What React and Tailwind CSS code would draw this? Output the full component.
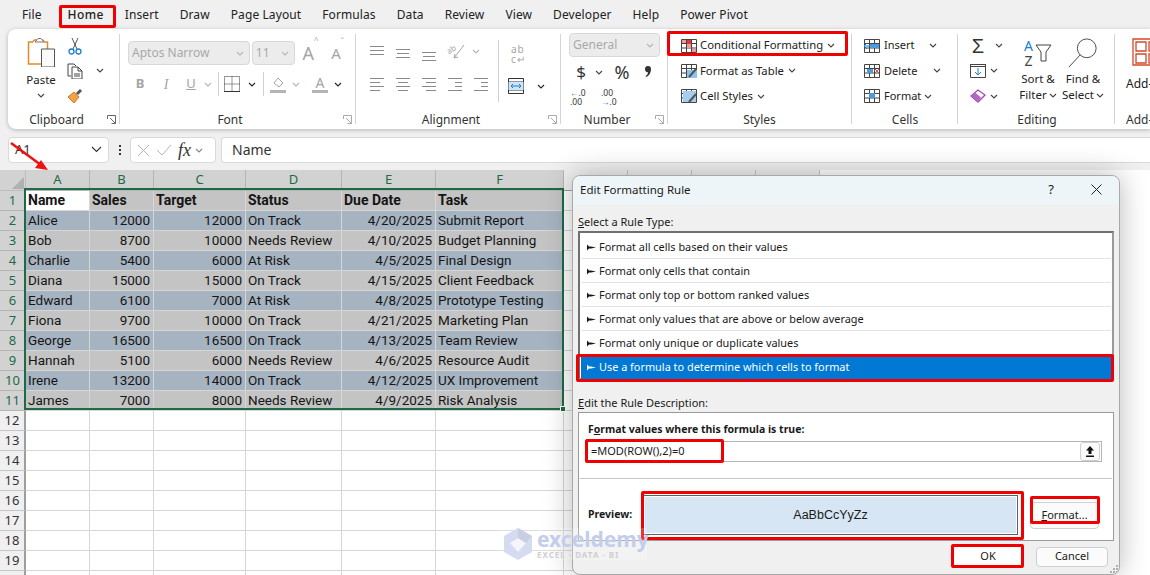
import React from "react";

const ui = "font-['Noto_Sans',sans-serif]";

const tabs = ["File", "Home", "Insert", "Draw", "Page Layout", "Formulas", "Data", "Review", "View", "Developer", "Help", "Power Pivot"];

const columns = [
  { name: "A", w: "w-[64px]" },
  { name: "B", w: "w-[64px]" },
  { name: "C", w: "w-[92px]" },
  { name: "D", w: "w-[96px]" },
  { name: "E", w: "w-[94px]" },
  { name: "F", w: "w-[128px]" },
  { name: "G", w: "w-[64px]" },
  { name: "H", w: "w-[64px]" },
  { name: "I", w: "w-[64px]" },
  { name: "J", w: "w-[64px]" },
];

const people = [
  ["Alice", "12000", "12000", "On Track", "4/20/2025", "Submit Report"],
  ["Bob", "8700", "10000", "Needs Review", "4/10/2025", "Budget Planning"],
  ["Charlie", "5400", "6000", "At Risk", "4/5/2025", "Final Design"],
  ["Diana", "15000", "15000", "On Track", "4/15/2025", "Client Feedback"],
  ["Edward", "6100", "7000", "At Risk", "4/8/2025", "Prototype Testing"],
  ["Fiona", "9700", "10000", "On Track", "4/21/2025", "Marketing Plan"],
  ["George", "16500", "16500", "On Track", "4/13/2025", "Team Review"],
  ["Hannah", "5100", "6000", "Needs Review", "4/6/2025", "Resource Audit"],
  ["Irene", "13200", "14000", "On Track", "4/12/2025", "UX Improvement"],
  ["James", "7000", "8000", "Needs Review", "4/9/2025", "Risk Analysis"],
];

const header = ["Name", "Sales", "Target", "Status", "Due Date", "Task"];

const rules = [
  "Format all cells based on their values",
  "Format only cells that contain",
  "Format only top or bottom ranked values",
  "Format only values that are above or below average",
  "Format only unique or duplicate values",
];

const Chev = ({ c = "#444" }) => (
  <svg width="8" height="5" viewBox="0 0 8 5" fill="none" stroke={c} strokeWidth="1.1">
    <path d="M1 1l3 3 3-3" />
  </svg>
);

const Launcher = ({ c = "#aaa" }) => (
  <svg width="9" height="9" viewBox="0 0 9 9" fill="none" stroke={c} strokeWidth="1">
    <path d="M.5 4V.5H8.5V8.5M3 3l5 5M4.500 8.500h4v-4" />
  </svg>
);

const Sep = () => <div className="w-px my-[5px] bg-[#d4d4d4] shrink-0" />;

const Label = ({ children, launcher, lc, pad = "pr-0" }) => (
  <div className={`h-[20px] pt-[1px] flex items-center justify-center relative text-[12px] text-[#333] ${pad}`}>
    {children}
    {launcher && (
      <span className="absolute right-[3px] top-[6px] flex">
        <Launcher c={lc} />
      </span>
    )}
  </div>
);

// paragraph lines: [y, x, width]
const Lines = ({ rows }) => (
  <svg width="16" height="20" viewBox="0 0 16 20" stroke="#8a8a8a" strokeWidth="1" fill="none">
    {rows.map(([y, x, w], i) => (
      <path key={i} d={`M${x} ${y + 0.5}h${w}`} />
    ))}
  </svg>
);

const GridIcon = ({ children }) => (
  <svg width="18" height="16" viewBox="0 0 18 16" fill="none">
    <path d="M1.500 1.500h15v13h-15zM1.500 5.500h15M1.500 10h15M6.500 1.500v13M11.500 1.500v13" stroke="#444" />
    {children}
  </svg>
);

const StyleRow = ({ icon, text }) => (
  <div className="h-[25.5px] flex items-center">
    <span className="w-[20px] ml-[11px] flex justify-center">{icon}</span>
    <span className="ml-[1px] text-[11.3px] text-[#222] mr-[4px]">{text}</span>
    <Chev />
  </div>
);

const CellRow = ({ icon, text, w }) => (
  <div className="h-[25.5px] flex items-center">
    <span className="w-[18px] ml-[11px] flex justify-center">{icon}</span>
    <span className={`ml-[3px] text-[11px] text-[#222] ${w}`}>{text}</span>
    <Chev />
  </div>
);

const Combo = ({ text, w }) => (
  <div className={`${w} h-[24px] bg-[#ececec] border border-[#d8d8d8] rounded-[4px] flex items-center justify-between pl-[3px] pr-[5px] text-[12px] text-[#a9a9a9]`}>
    <span>{text}</span>
    <Chev c="#b5b5b5" />
  </div>
);

const alignTop = [[[5, 1, 14], [9, 1, 14], [13, 1, 14]], [[8, 1, 14], [12, 2, 12], [16, 1, 14]], [[11, 1, 14], [15, 2, 12], [19, 1, 14]]];
const alignBottom = [
  [[4, 1, 14], [8, 1, 10], [12, 1, 14], [16, 1, 10]],
  [[4, 1, 14], [8, 3, 10], [12, 1, 14], [16, 3, 10]],
  [[4, 1, 14], [8, 5, 10], [12, 1, 14], [16, 5, 10]],
];

const Ribbon = () => (
  <div className={`ml-2 h-[100px] flex rounded-l-[8px] bg-white shadow-[0_1px_4px_rgba(0,0,0,0.25)] ${ui}`}>
    {/* Clipboard */}
    <div className="w-[111px] flex flex-col shrink-0">
      <div className="h-[80px] flex">
        <div className="w-[52px] ml-[7px] flex flex-col items-center pt-[8px]">
          <svg width="28" height="30" viewBox="0 0 28 30" fill="none">
            <path d="M1.500 5h4l2-2h8l2 2h3v22h-19z" fill="#fff" stroke="#e08a2c" strokeWidth="1.5" />
            <path d="M8 5l3-3.500h3l3 3.500z" fill="#fff" stroke="#777" />
            <path d="M14.500 12h13v18h-13z" fill="#fafafa" stroke="#555" />
          </svg>
          <span className="text-[11.5px] text-[#222] mt-[5px] leading-[16px]">Paste</span>
          <span className="mt-[5px] flex"><Chev /></span>
        </div>
        <div className="flex flex-col pt-[4px]">
          <div className="h-[25.5px] flex items-center">
            <svg width="14" height="18" viewBox="0 0 14 18" fill="none" className="ml-[1px]">
              <path d="M4 1l5 11M10 1L5 12" stroke="#555" />
              <circle cx="3.5" cy="14.5" r="2.5" stroke="#1d7fd0" strokeWidth="1.3" />
              <circle cx="10.5" cy="14.5" r="2.5" stroke="#1d7fd0" strokeWidth="1.3" />
            </svg>
          </div>
          <div className="h-[25.5px] flex items-center">
            <svg width="16" height="16" viewBox="0 0 16 16" fill="none" stroke="#444">
              <path d="M4 13H1V1h6l2 2M5 4h6l4 4v8H5zM11 4v4h4M7 11h6M7 13h6" />
            </svg>
            <span className="ml-[13px] flex"><Chev /></span>
          </div>
          <div className="h-[25.5px] flex items-center">
            <svg width="17" height="16" viewBox="0 0 17 16" fill="none">
              <path d="M1 9l6-5 5 5-5 6z" fill="#f0a24a" stroke="#d9781f" />
              <path d="M10 6l4-4" stroke="#555" strokeWidth="3" />
            </svg>
          </div>
        </div>
      </div>
      <Label launcher lc="#666" pad="pr-[14px]">Clipboard</Label>
    </div>
    <Sep />

    {/* Font */}
    <div className="w-[235px] flex flex-col shrink-0">
      <div className="h-[80px] flex flex-col">
        <div className="flex items-center gap-[2px] ml-[8px] mt-[12px]">
          <Combo text="Aptos Narrow" w="w-[123px]" />
          <Combo text="11" w="w-[43px]" />
          <span className="ml-[6px] w-[27px] text-[18px] leading-none text-[#a5a5a5]">A<sup className="text-[8px] align-top">^</sup></span>
          <span className="w-[24px] text-[15px] leading-none text-[#a5a5a5]">A<sup className="text-[8px] align-top">ˇ</sup></span>
        </div>
        <div className="flex items-center mt-[7px] h-[24px] text-[#a5a5a5]">
          <span className="w-[14px] ml-[13px] text-center font-bold text-[13px]">B</span>
          <span className="w-[14px] ml-[12px] text-center italic text-[14px] font-['Liberation_Serif',serif]">I</span>
          <span className="w-[14px] ml-[11px] text-center underline text-[13px]">U</span>
          <span className="ml-[6px] flex"><Chev c="#b5b5b5" /></span>
          <span className="w-px h-[24px] bg-[#cfcfcf] ml-[6px]" />
          <svg width="16" height="16" viewBox="0 0 16 16" fill="none" stroke="#333" strokeDasharray="1 1" className="ml-[5px]">
            <path d="M.5 .5h15v15H.5zM8 .5v15M.5 8h15" />
            <path d="M0 15.5h16" strokeDasharray="none" />
          </svg>
          <span className="ml-[8px] flex"><Chev c="#222" /></span>
          <span className="w-px h-[24px] bg-[#cfcfcf] ml-[7px]" />
          <svg width="17" height="17" viewBox="0 0 17 17" fill="none" className="ml-[6px]">
            <path d="M8 2l5 5-4 4-5-4z" stroke="#a5a5a5" />
            <path d="M0 14h16v3H0z" fill="#b5b5b5" />
          </svg>
          <span className="ml-[5px] flex"><Chev c="#b5b5b5" /></span>
          <span className="w-[16px] ml-[12px] text-center text-[14px] leading-[15px] border-b-[3px] border-[#b5b5b5]">A</span>
          <span className="ml-[6px] flex"><Chev c="#222" /></span>
        </div>
      </div>
      <Label launcher pad="pr-[15px]">Font</Label>
    </div>
    <Sep />

    {/* Alignment */}
    <div className="w-[204px] flex flex-col shrink-0">
      <div className="h-[80px] flex">
        <div className="flex flex-col ml-[13px] mt-[12px]">
          <div className="flex gap-[10px] h-[20px] items-center">
            {alignTop.map((rows, i) => <Lines key={i} rows={rows} />)}
            <svg width="18" height="18" viewBox="0 0 18 18" fill="none" stroke="#a5a5a5" className="overflow-visible">
              <text x="1" y="11" fontSize="8" fill="#a5a5a5" stroke="none" transform="rotate(-35 4 10)">ab</text>
              <path d="M17 3L7 16M7 16l4-1M7 16l1-4" />
            </svg>
            <span className="-ml-[3px] flex"><Chev c="#b5b5b5" /></span>
          </div>
          <div className="flex gap-[10px] h-[20px] items-center mt-[13px]">
            {alignBottom.map((rows, i) => <Lines key={i} rows={rows} />)}
            <Lines rows={[[4, 1, 14], [8, 8, 7], [12, 8, 7], [16, 1, 14]]} />
            <Lines rows={[[4, 1, 14], [8, 8, 7], [12, 8, 7], [16, 1, 14]]} />
          </div>
        </div>
        <span className="w-px h-[62px] mt-[11px] ml-[9px] bg-[#cfcfcf]" />
        <div className="flex flex-col ml-[10px] mt-[15px]">
          <span className="text-[10px] leading-[10px] text-[#a5a5a5] pl-[2px] tracking-[1px]">ab<br />c↵</span>
          <div className="flex items-center mt-[14px]">
            <svg width="16" height="16" viewBox="0 0 16 16" fill="none" className="-ml-[1px]">
              <path d="M.5 .5h15v15H.5zM.5 4h15M.5 12h15" stroke="#333" />
              <path d="M.5 4h15v8H.5z" fill="#cfe4f7" />
              <path d="M3 8h10M5 6L3 8l2 2M11 6l2 2-2 2" stroke="#1d7fd0" />
            </svg>
            <span className="ml-[13px] flex"><Chev c="#222" /></span>
          </div>
        </div>
      </div>
      <Label launcher pad="pr-[14px]">Alignment</Label>
    </div>
    <Sep />

    {/* Number */}
    <div className="w-[106px] flex flex-col shrink-0">
      <div className="h-[80px] flex flex-col pl-[8px]">
        <div className="mt-[4px]"><Combo text="General" w="w-[91px]" /></div>
        <div className="flex items-center h-[26px] mt-[2px] text-[#333]">
          <span className="w-[24px] text-center text-[17px]">$</span>
          <span className="ml-[2px] flex"><Chev /></span>
          <span className="ml-[7px] w-[24px] text-center text-[18px]">%</span>
          <svg width="8" height="12" viewBox="0 0 8 12" className="ml-[10px]">
            <path d="M1 3a3 3 0 1 1 6 0c0 4-2 7-5 8l-.5-.8C3 9 4 7.800 4 6.200 2 6.500 1 5 1 3z" fill="#333" />
          </svg>
        </div>
        <div className="flex items-center h-[26px] text-[8.5px] leading-[9px] text-[#333]">
          <span className="w-[18px] ml-[1px]"><span className="text-[#1d7fd0]">←</span>.0<br />.00</span>
          <span className="w-[18px] ml-[13px]">.00<br /><span className="text-[#1d7fd0]">→</span>.0</span>
        </div>
      </div>
      <Label launcher pad="pr-[14px]">Number</Label>
    </div>
    <Sep />

    {/* Styles */}
    <div className="w-[183px] flex flex-col shrink-0">
      <div className="h-[80px] pt-[4px] flex flex-col">
        <StyleRow text="Conditional Formatting" icon={<GridIcon><path d="M2 2h4v3H2zM7 6h4v4H7zM12 11h4v3h-4z" fill="#f29a9a" /><path d="M7 2h4v4H7z" fill="#e33" /></GridIcon>} />
        <StyleRow text="Format as Table" icon={<GridIcon><path d="M7 7h10v8H7z" fill="#8cc2ee" /><path d="M9 14l7-8" stroke="#555" strokeWidth="2" /></GridIcon>} />
        <StyleRow text="Cell Styles" icon={<GridIcon><path d="M3 3h13v11H3z" fill="#a5cdf0" /><path d="M9 14l7-8" stroke="#555" strokeWidth="2" /></GridIcon>} />
      </div>
      <Label>Styles</Label>
    </div>
    <Sep />

    {/* Cells */}
    <div className="w-[105px] flex flex-col shrink-0">
      <div className="h-[80px] pt-[4px] flex flex-col">
        <CellRow text="Insert" w="w-[45px]" icon={<GridIcon><path d="M7 6h9v4H7z" fill="#4a9be0" /><path d="M7 8H1M4 5L1 8l3 3" stroke="#1d7fd0" /></GridIcon>} />
        <CellRow text="Delete" w="w-[49px]" icon={<GridIcon><path d="M4 6h6v4H4z" fill="#4a9be0" /><path d="M12 6l4 4M16 6l-4 4" stroke="#e44" /></GridIcon>} />
        <CellRow text="Format" w="w-[40px]" icon={<GridIcon><path d="M6 5h6v5H6z" fill="#4a9be0" /></GridIcon>} />
      </div>
      <Label pad="pl-[1px]">Cells</Label>
    </div>
    <Sep />

    {/* Editing */}
    <div className="w-[156px] flex flex-col shrink-0">
      <div className="h-[80px] flex">
        <div className="flex flex-col pt-[4px] ml-[12px] w-[50px]">
          <div className="h-[25.5px] flex items-center">
            <span className="w-[16px] text-[20px] text-center leading-none text-[#333] font-['Liberation_Sans',sans-serif]">Σ</span>
            <span className="ml-[9px] flex"><Chev /></span>
          </div>
          <div className="h-[25.5px] flex items-center">
            <svg width="16" height="14" viewBox="0 0 16 14" fill="none">
              <path d="M.5 .5h15v13H.5z" stroke="#444" />
              <path d="M.5 .5h15v2H.5z" stroke="#444" />
              <path d="M8 4v7M5 8l3 3 3-3" stroke="#1d7fd0" />
            </svg>
            <span className="ml-[4px] flex"><Chev /></span>
          </div>
          <div className="h-[25.5px] flex items-center">
            <svg width="16" height="14" viewBox="0 0 16 14" fill="none">
              <path d="M1 7l7-6 7 5-7 7z" fill="#fff" stroke="#a04ab0" strokeWidth="1.3" />
              <path d="M1 7l4-3.500 6 5-3 4.500z" fill="#b565c5" />
            </svg>
            <span className="ml-[4px] flex"><Chev /></span>
          </div>
        </div>
        <div className="w-[54px] -ml-[9px] flex flex-col items-center pt-[8px]">
          <div className="h-[32px] flex items-center gap-[2px]">
            <span className="text-[14px] leading-[15px] text-center"><span className="text-[#1d7fd0]">A</span><br /><span className="text-[#444]">Z</span></span>
            <svg width="17" height="19" viewBox="0 0 17 19" fill="none" stroke="#444">
              <path d="M1 1h15L11 8v9H6V8z" />
            </svg>
          </div>
          <span className="text-[11.5px] text-[#222] leading-[16px] mt-[2px]">Sort &amp;</span>
          <span className="text-[11.5px] text-[#222] leading-[16px] flex items-center gap-[2px]">Filter <Chev /></span>
        </div>
        <div className="w-[48px] -ml-[6px] flex flex-col items-center pt-[8px]">
          <div className="h-[32px] flex items-center">
            <svg width="30" height="30" viewBox="0 0 32 32" fill="none" stroke="#444">
              <circle cx="20" cy="11" r="10" />
              <path d="M13 18L1 31" />
            </svg>
          </div>
          <span className="text-[11.5px] text-[#222] leading-[16px] mt-[2px]">Find &amp;</span>
          <span className="text-[11.5px] text-[#222] leading-[16px] flex items-center gap-[2px]">Select <Chev /></span>
        </div>
      </div>
      <Label pad="pl-[2px]">Editing</Label>
    </div>
    <Sep />

    {/* Add-ins, cut off at the window edge */}
    <div className="flex-1 overflow-hidden flex flex-col">
      <div className="h-[80px] pl-[17px] pt-[9px] flex flex-col">
        <svg width="40" height="28" viewBox="0 0 40 28" fill="none" stroke="#d2492a" strokeWidth="1.3" className="shrink-0">
          <path d="M1 1h40v26H1zM4 4h10v9H4zM17 4h12v9H17zM4 16h10v9H4zM17 16h12v9H17z" />
        </svg>
        <span className="text-[12px] text-[#222] leading-[16px] mt-[10px] -ml-[6px]">Add-</span>
      </div>
      <div className="h-[20px] pt-[1px] flex items-center text-[12px] text-[#333] pl-[11px]">Add-</div>
    </div>
  </div>
);

const FormulaBar = () => (
  <div className={`mt-2 ml-2 h-[26px] flex items-stretch ${ui}`}>
    <div className="w-[101px] bg-white border border-[#d9d9d9] rounded-[4px] flex items-center justify-between pl-[6px] pr-[6px] pb-[1px] text-[13px] text-[#333]">
      <span>A1</span>
      <svg width="11" height="7" viewBox="0 0 11 7" fill="none" stroke="#333" strokeWidth="1.1"><path d="M1 1l4.500 4.500L10 1" /></svg>
    </div>
    <div className="w-[21px] flex flex-col items-center justify-center gap-[2px]">
      <span className="w-[2px] h-[2px] bg-[#333]" />
      <span className="w-[2px] h-[2px] bg-[#333]" />
      <span className="w-[2px] h-[2px] bg-[#333]" />
    </div>
    <div className="w-[86px] bg-white border border-[#d9d9d9] rounded-[4px] flex items-center pl-[6px]">
      <svg width="13" height="13" viewBox="0 0 13 13" fill="none" stroke="#b5b5b5"><path d="M1 1l11 11M12 1L1 12" /></svg>
      <svg width="16" height="12" viewBox="0 0 16 12" fill="none" stroke="#b5b5b5" className="ml-[6px]"><path d="M1 6l5 5L15 1" /></svg>
      <span className="ml-[6px] text-[18px] leading-none italic font-['Liberation_Serif',serif] text-[#333]">fx</span>
      <span className="ml-[4px] flex"><Chev c="#888" /></span>
    </div>
    <div className="flex-1 ml-[5px] pb-[1px] bg-white border-y border-l border-[#d9d9d9] rounded-l-[4px] flex items-center pl-[10px] text-[14px] text-[#333]">Name</div>
  </div>
);

const Sheet = () => {
  const rows = Array.from({ length: 20 }, (_, i) => i + 1);
  return (
    <div className="relative mt-[7px] flex-1 bg-white overflow-hidden">
      <div className={`flex h-[21px] ${ui}`}>
        <div className="w-[26px] shrink-0 bg-[#d2d2d2] relative border-r border-b border-[#bdbdbd] overflow-hidden">
          <svg width="14" height="14" viewBox="0 0 14 14" className="absolute right-[1px] bottom-[1px]"><path d="M14 2v12H2z" fill="#b0b0b0" /></svg>
        </div>
        {columns.map((c, i) => (
          <div
            key={c.name}
            className={`${c.w} shrink-0 border-r flex items-center justify-center text-[13px] ${i < 6 ? "bg-[#d2d2d2] text-[#1c6b46] border-[#b5b5b5] border-b border-b-[#b5b5b5]" : "bg-[#f0f0f0] text-[#444] border-[#c6c6c6] border-b border-b-[#9e9e9e]"}`}
          >
            {c.name}
          </div>
        ))}
      </div>

      {rows.map((r) => {
        const data = r === 1 ? header : people[r - 2];
        const banded = r <= 11 && r % 2 === 0;
        return (
          <div key={r} className="flex h-[20px]">
            <div className={`w-[26px] shrink-0 flex items-center justify-center text-[13px] border-b ${ui} ${r <= 11 ? "bg-[#d2d2d2] text-[#1c6b46] border-r border-[#b5b5b5]" : "bg-[#f0f0f0] text-[#333] border-[#c6c6c6] border-r-2 border-r-[#9e9e9e]"}`}>
              {r}
            </div>
            {columns.map((c, i) => {
              const v = data && data[i];
              const filled = r <= 11 && i < 6;
              const right = r > 1 && (i === 1 || i === 2 || i === 4);
              return (
                <div
                  key={c.name}
                  className={`${c.w} shrink-0 border-r border-b border-[#d6d6d6] flex items-center pl-[2px] pr-[3px] whitespace-nowrap font-['Roboto',sans-serif] text-[#151515] ${right ? "justify-end" : ""} ${r === 1 ? "font-bold text-[14px]" : "text-[13.5px]"} ${filled ? (r === 1 && i === 0 ? "bg-white" : banded ? "bg-[#a6b3c1]" : "bg-[#c4c4c4]") : ""}`}
                >
                  {v}
                </div>
              );
            })}
          </div>
        );
      })}

      {/* selected range */}
      <div className="absolute left-[24px] top-[18px] w-[540px] h-[222px] border-2 border-[#1c6b46] pointer-events-none" />
      <div className="absolute left-[560px] top-[236px] w-[6px] h-[6px] bg-[#1c6b46] border border-white" />
    </div>
  );
};

const RedBox = ({ className }) => (
  <div className={`absolute border-[3px] border-[#f00000] rounded-[2px] pointer-events-none ${className}`} />
);

const RuleArrow = () => (
  <svg width="9" height="7" viewBox="0 0 9 7" className="mr-[3px] shrink-0" fill="currentColor">
    <path d="M0 .5l2 2h2l5 1-5 1H2l-2 2z" />
  </svg>
);

const Dialog = () => (
  <div className={`absolute left-[572px] top-[175px] w-[548px] h-[400px] bg-[#f0f0f0] rounded-[8px] border border-[#a8a8a8] shadow-[0_0_28px_rgba(0,0,0,0.28)] text-[11px] text-[#1a1a1a] overflow-hidden ${ui}`}>
    <div className="h-[29px] pb-[2px] bg-[#eef5f8] flex items-center pl-[7px] text-[11.5px]">
      <span>Edit Formatting Rule</span>
      <span className="ml-auto mr-[37px] text-[13px]">?</span>
      <svg width="11" height="11" viewBox="0 0 11 11" fill="none" stroke="#222" className="mr-[17px]"><path d="M.5 .5l10 10M10.500 .5l-10 10" /></svg>
    </div>

    <div className="px-[5px]">
      <div className="h-[26px] pt-[9px] leading-[16px]"><u>S</u>elect a Rule Type:</div>
      <div className="w-[536px] h-[149px] bg-white border-2 border-[#6f6f6f] border-r-[#9a9a9a] border-b-[#9a9a9a] pt-[2px] px-[1px] flex flex-col text-[10.9px]">
        {rules.map((r) => (
          <div key={r} className="h-[24px] pt-[1px] shrink-0 border-b border-[#e4e4e4] flex items-center pl-[6px]">
            <RuleArrow />{r}
          </div>
        ))}
        <div className="h-[24px] shrink-0 bg-[#0078d4] text-white flex items-center pl-[6px]">
          <RuleArrow />Use a formula to determine which cells to format
        </div>
      </div>

      <div className="h-[32px] pt-[15px] leading-[16px]"><u>E</u>dit the Rule Description:</div>
      <div className="w-[536px] h-[129px] bg-white border border-[#9a9a9a] px-[9px] flex flex-col">
        <div className="pt-[8px] h-[28px] text-[10.5px] font-bold leading-[16px]">F<u>o</u>rmat values where this formula is true:</div>
        <div className="w-[517px] h-[21px] -ml-[3px] border border-[#b5b5b5] flex items-center pl-[5px] pr-[1px] justify-between">
          <span>=MOD(ROW(),2)=0</span>
          <span className="w-[20px] h-[19px] bg-[#fafafa] border border-[#d0d0d0] rounded-[3px] flex items-center justify-center">
            <svg width="10" height="11" viewBox="0 0 10 11"><path d="M5 0l4 4.500H6.500V8h-3V4.500H1zM1 9.500h8V11H1z" fill="#111" /></svg>
          </span>
        </div>
        <div className="mt-[16px] -mx-[8px] h-px bg-[#c8c8c8] shrink-0" />
        <div className="flex items-center mt-[16px]">
          <span className="font-bold text-[10.5px] w-[55px] shrink-0">Preview:</span>
          <div className="w-[375px] h-[40px] shrink-0 bg-white border border-[#5f5f5f] p-[1px] flex">
            <div className="flex-1 bg-[#d6e6f5] flex items-center justify-center text-[12.5px] font-['Liberation_Sans',sans-serif]">AaBbCcYyZz</div>
          </div>
          <div className="ml-[12px] w-[69px] h-[27px] shrink-0 bg-[#fbfbfb] border border-[#d0d0d0] rounded-[4px] flex items-center justify-center"><span><u>F</u>ormat...</span></div>
        </div>
      </div>

      <div className="flex justify-end items-center mt-[5px] mr-[6px] gap-[12px]">
        <div className="w-[72px] h-[21px] bg-white rounded-[4px] flex items-center justify-center">OK</div>
        <div className="w-[72px] h-[20px] bg-[#fbfbfb] border border-[#cfcfcf] rounded-[4px] flex items-center justify-center">Cancel</div>
      </div>
    </div>

    {/* resize grip */}
    <svg width="9" height="9" viewBox="0 0 9 9" className="absolute right-[1px] bottom-[1px]" fill="#b0b0b0">
      <path d="M7 1h2v2H7zM4 4h2v2H4zM7 4h2v2H7zM1 7h2v2H1zM4 7h2v2H4zM7 7h2v2H7z" />
    </svg>

    <RedBox className="left-[3px] top-[178px] w-[538px] h-[28px]" />
    <RedBox className="left-[12px] top-[263px] w-[139px] h-[24px]" />
    <RedBox className="left-[68px] top-[315px] w-[383px] h-[49px]" />
    <RedBox className="left-[457px] top-[320px] w-[70px] h-[28px]" />
    <RedBox className="left-[378px] top-[368px] w-[73px] h-[24px]" />
  </div>
);

export default function App() {
  return (
    <div className="relative w-[1150px] h-[575px] overflow-hidden bg-[#f0f0f0] flex flex-col">
      <div className={`h-[29px] flex items-center pl-[22px] gap-[21px] text-[12px] tracking-[0.1px] text-[#222] shrink-0 ${ui}`}>
        {tabs.map((t) => (
          <span key={t} className={`relative ${t === "File" ? "mr-[5px]" : ""} ${t === "Home" ? "font-medium tracking-[0.4px]" : ""}`}>
            {t}
            {t === "Home" && <span className="absolute left-0 right-0 -bottom-[3px] h-[2px] bg-[#1c6b46]" />}
          </span>
        ))}
      </div>
      <Ribbon />
      <FormulaBar />
      <Sheet />
      <Dialog />

      {/* annotations on top of the screenshot */}
      <RedBox className="left-[59px] top-[5px] w-[57px] h-[23px]" />
      <RedBox className="left-[667px] top-[31px] w-[181px] h-[25px]" />
      <svg width="50" height="40" viewBox="0 0 50 40" className="absolute left-[8px] top-[140px]">
        <path d="M3 3l30 22" stroke="#ef1010" strokeWidth="2.5" />
        <path d="M40 30l-13-2 6-8z" fill="#ef1010" />
      </svg>

      {/* watermark */}
      <div className={`absolute left-[497px] top-[528px] w-[150px] h-[32px] flex items-center bg-white/20 pointer-events-none ${ui}`}>
        <svg width="30" height="32" viewBox="0 0 30 32" className="ml-[6px] shrink-0">
          <path d="M15 0l14 8v16l-14 8-14-8V8z" fill="#d5dcf2" />
          <path d="M15 10l8 5-8 9-8-9z" fill="#f4f6fc" />
          <path d="M15 0l14 8-6 7-8-5z" fill="#c8cfe0" />
        </svg>
        <div className="ml-[4px] flex flex-col">
          <span className="text-[21px] font-bold leading-[20px] text-[#c3cdec]">exceldemy</span>
          <span className="text-[8px] font-bold tracking-[1px] leading-[11px] text-[#cfcfcf]">EXCEL · DATA · BI</span>
        </div>
      </div>
    </div>
  );
}
